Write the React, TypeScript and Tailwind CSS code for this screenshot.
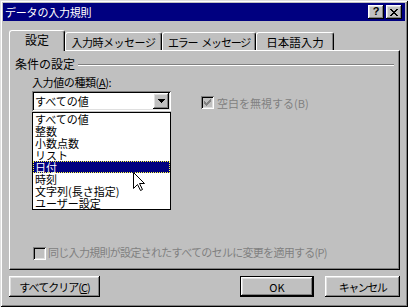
import React from "react";

const raised =
  "bg-[#c0c0c0] shadow-[inset_-1px_-1px_0_#000,inset_1px_1px_0_#fff,inset_-2px_-2px_0_#808080,inset_2px_2px_0_#dfdfdf]";
const sunken =
  "shadow-[inset_1px_1px_0_#808080,inset_-1px_-1px_0_#fff,inset_2px_2px_0_#000,inset_-2px_-2px_0_#dfdfdf]";

function Tab({ label, w, selected, t }: { label: React.ReactNode; w: string; selected?: boolean; t: string }) {
  return (
    <div
      className={
        (selected ? "h-[21px] -mb-[1px] z-10 " : "h-[18px] ") +
        w +
        " relative bg-[#c0c0c0] border-t border-l border-white border-r border-r-black rounded-t-[3px] shadow-[inset_-1px_0_0_#808080] flex items-center justify-center leading-[12px] text-black whitespace-pre"
      }
    >
      <span className={(selected ? "-mt-[2px] " : "") + t}>{label}</span>
    </div>
  );
}

function Button({ children, w, def }: { children: React.ReactNode; w: string; def?: boolean }) {
  if (def) {
    return (
      <div className={w + " h-[21px] border border-black"}>
        <div className={raised + " w-full h-full flex items-center justify-center text-[11px] leading-[12px] whitespace-nowrap"}>
          {children}
        </div>
      </div>
    );
  }
  return (
    <div className={raised + " " + w + " h-[21px] flex items-center justify-center text-[11px] leading-[12px] whitespace-nowrap"}>
      {children}
    </div>
  );
}

const items = ["すべての値", "整数", "小数点数", "リスト", "日付", "時刻", "文字列(長さ指定)", "ユーザー設定"];

export default function App() {
  return (
    <div className="w-[408px] h-[307px] relative overflow-hidden bg-[#c0c0c0] p-[3px] flex flex-col font-['Noto_Sans_CJK_JP','Noto_Sans',sans-serif] text-black shadow-[inset_1px_1px_0_#dfdfdf,inset_-1px_-1px_0_#000,inset_2px_2px_0_#fff,inset_-2px_-2px_0_#808080]">
      {/* Title bar */}
      <div className="h-[18px] bg-[#000080] flex items-center pl-[2px] pr-[3px]">
        <span className="text-white text-[11px] leading-[12px] tracking-[-0.2px]">データの入力規則</span>
        <div className="ml-auto flex gap-[2px]">
          <div className={raised + " w-[16px] h-[14px] flex items-center justify-center"}>
            <span className="font-['Liberation_Sans',sans-serif] font-bold text-[11px] leading-[11px] -mt-[1px]">?</span>
          </div>
          <div className={raised + " w-[16px] h-[14px] flex items-center justify-center"}>
            <svg width="8" height="7" viewBox="0 0 8 7" shapeRendering="crispEdges">
              <path d="M0 0h2v1h-2zM6 0h2v1h-2zM1 1h2v1h-2zM5 1h2v1h-2zM2 2h4v1h-4zM3 3h2v1h-2zM2 4h4v1h-4zM1 5h2v1h-2zM5 5h2v1h-2zM0 6h2v1h-2zM6 6h2v1h-2z" fill="#000" />
            </svg>
          </div>
        </div>
      </div>

      {/* Tabs */}
      <div className="mt-[9px] h-[20px] flex items-end pl-[6px] relative z-10">
        <Tab label="設定" w="w-[56px]" selected t="text-[12px]" />
        <Tab label="入力時メッセージ" w="w-[97px]" t="text-[11px] tracking-[-0.5px]" />
        <Tab
          label={
            <>
              <span>エラー</span>
              <span className="ml-[4px]">メッセージ</span>
            </>
          }
          w="w-[94px]"
          t="text-[11px] tracking-[-1.2px]"
        />
        <Tab label="日本語入力" w="w-[78px]" t="text-[11.5px]" />
      </div>

      {/* Panel */}
      <div className="ml-[6px] w-[391px] h-[220px] border-t border-l border-white border-r border-b border-r-black border-b-black shadow-[inset_-1px_-1px_0_#808080] flex flex-col relative">
        <div className="mt-[7px] pl-[5px] flex items-center h-[12px]">
          <span className="text-[12px] leading-[12px]">条件の設定</span>
          <div className="flex-1 ml-[3px] mr-[5px] mt-[2px] h-[2px] border-t border-t-[#808080] border-b border-b-white" />
        </div>
        <div className="mt-[6px] pl-[22px] text-[11px] leading-[12px] tracking-[-0.4px]">
          入力値の種類(<span className="underline">A</span>):
        </div>
        <div className="mt-[3px] flex">
          <div className={sunken + " ml-[22px] w-[139px] h-[20px] bg-white relative"}>
            <div className="pl-[3px] pt-[4px] text-[11px] leading-[12px]">すべての値</div>
            <div className={raised + " absolute right-[2px] top-[2px] w-[16px] h-[16px] flex items-center justify-center"}>
              <svg width="7" height="4" viewBox="0 0 7 4" shapeRendering="crispEdges">
                <path d="M0 0h7v1h-7zM1 1h5v1h-5zM2 2h3v1h-3zM3 3h1v1h-1z" fill="#000" />
              </svg>
            </div>
            {/* dropdown list */}
            <div className="absolute left-0 top-[21px] w-[139px] h-[98px] bg-white border border-black z-20 flex flex-col">
              {items.map((it, i) =>
                i === 4 ? (
                  <div key={it} className="h-[12px] bg-[#000080] border border-dotted border-[#ffff40] text-white text-[11px] leading-[10px] pl-[1px] whitespace-nowrap">
                    {it}
                  </div>
                ) : (
                  <div key={it} className="h-[12px] text-[11px] leading-[12px] pl-[2px] whitespace-nowrap">
                    {it}
                  </div>
                )
              )}
            </div>
          </div>
          <div className="ml-[30px] mt-[5px] flex items-center h-[13px]">
            <div className={sunken + " w-[13px] h-[13px] bg-[#c0c0c0] flex items-center justify-center"}>
              <svg width="7" height="7" viewBox="0 0 7 7" shapeRendering="crispEdges">
                <path d="M6 0h1v3h-1zM5 1h1v3h-1zM4 2h1v3h-1zM3 3h1v3h-1zM2 4h1v3h-1zM1 3h1v3h-1zM0 2h1v3h-1z" fill="#808080" />
              </svg>
            </div>
            <span className="ml-[3px] text-[11px] leading-[12px] text-[#808080] whitespace-nowrap">空白を無視する(B)</span>
          </div>
        </div>
        <div className="flex-1" />
        <div className="mb-[9px] pl-[23px] flex items-center h-[13px]">
          <div className={sunken + " w-[13px] h-[13px] bg-[#c0c0c0]"} />
          <span className="ml-[2px] -mt-[3px] text-[11px] leading-[12px] tracking-[-0.7px] text-[#808080] whitespace-nowrap">
            同じ入力規則が設定されたすべてのセルに変更を適用する(P)
          </span>
        </div>
      </div>

      {/* Buttons */}
      <div className="mt-[6px] flex pl-[6px]">
        <Button w="w-[91px]">
          <span className="tracking-[-1px]">
            すべてクリア(<span className="underline">C</span>)
          </span>
        </Button>
        <div className="ml-[140px]">
          <Button w="w-[74px]" def>
            OK
          </Button>
        </div>
        <div className="ml-[11px]">
          <Button w="w-[75px]">
            <span className="tracking-[-1.5px]">キャンセル</span>
          </Button>
        </div>
      </div>

      {/* mouse cursor */}
      <svg className="absolute left-[133px] top-[172px] z-30" width="12" height="20" viewBox="0 0 12 20">
        <path d="M0.5 0.5 L0.5 16.5 L4.5 12.5 L7.5 18.5 L9.5 17.5 L6.5 11.5 L11.5 11.5 Z" fill="#fff" stroke="#000" strokeWidth="1" />
      </svg>
    </div>
  );
}
